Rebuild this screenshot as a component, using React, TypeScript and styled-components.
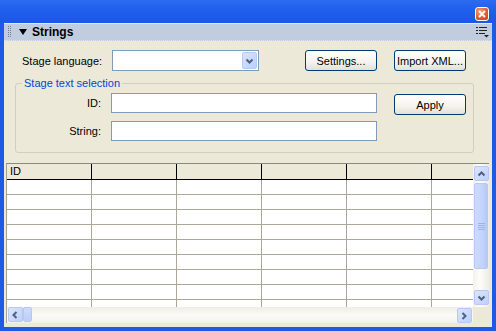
import React from "react";
import styled, { createGlobalStyle } from "styled-components";

const GlobalStyle = createGlobalStyle`
  html, body { margin: 0; padding: 0; background: #ffffff; }
  body { font-family: "Liberation Sans", Arial, sans-serif; font-size: 11px; color: #000; }
  * { box-sizing: border-box; }
`;

const Window = styled.div`
  width: 496px;
  height: 331px;
  display: flex;
  flex-direction: column;
  background: #1d5ae6;
  overflow: hidden;
`;

const TitleBar = styled.div`
  height: 23px;
  flex: none;
  display: flex;
  justify-content: flex-end;
  align-items: flex-start;
  padding: 7px 7px 0 0;
  background: linear-gradient(#2d6cf0, #1f60ec 40%, #1b58e4);
`;

const CloseButton = styled.div`
  width: 14px;
  height: 14px;
  border: 1px solid #fff;
  border-radius: 3px;
  background: radial-gradient(circle at 35% 30%, #f3a27f, #e0592c 60%, #c8421c);
  display: flex;
  align-items: center;
  justify-content: center;
`;

const Body = styled.div`
  flex: 1;
  margin: 0 4px 4px 4px;
  background: #ece9d8;
  display: flex;
  flex-direction: column;
`;

const PanelHeader = styled.div`
  height: 18px;
  flex: none;
  display: flex;
  align-items: center;
  padding: 0 3px 0 4px;
  background: #c1ccde;
  border-top: 1px solid #e4eaf4;
  border-bottom: 1px dotted #dde4ef;
`;

const GripIcon = styled.svg`
  margin-right: 7px;
  flex: none;
`;

const PanelTitle = styled.span`
  font-weight: bold;
  font-size: 12px;
  margin-left: 5px;
  flex: 1;
`;

const Form = styled.div`
  height: 122px;
  flex: none;
  padding: 9px 0 0 0;
  display: flex;
  flex-direction: column;
`;

const TopRow = styled.div`
  display: flex;
  align-items: center;
  height: 21px;
  padding-left: 18px;
`;

const RowLabel = styled.span`
  width: 90px;
  flex: none;
`;

const ComboBox = styled.div`
  width: 147px;
  height: 21px;
  border: 1px solid #7f9db9;
  background: #fff;
  display: flex;
  justify-content: flex-end;
  align-items: center;
  padding-right: 1px;
  margin-right: 46px;
`;

const DropButton = styled.div`
  width: 15px;
  height: 17px;
  border: 1px solid #b8cbf4;
  border-radius: 2px;
  background: linear-gradient(135deg, #d9e4fc, #bccefa);
  display: flex;
  align-items: center;
  justify-content: center;
`;

const XPButton = styled.div<{ $gap?: number }>`
  width: 72px;
  height: 21px;
  flex: none;
  margin-right: ${(p) => p.$gap ?? 0}px;
  border: 1px solid #003c74;
  border-radius: 3px;
  background: linear-gradient(#ffffff, #f4f3ee 60%, #e3e0d5);
  display: flex;
  align-items: center;
  justify-content: center;
`;

const GroupBox = styled.fieldset`
  margin: 6px 18px 0 11px;
  padding: 3px 0 11px 0;
  border: 1px solid #d0d0bf;
  border-radius: 3px;
`;

const Legend = styled.legend`
  color: #0046d5;
  line-height: 13px;
  margin-left: 6px;
  padding: 0 2px;
`;

const GroupGrid = styled.div`
  display: grid;
  grid-template-columns: 85px 266px 72px;
  grid-template-rows: 20px 20px;
  column-gap: 10px;
  row-gap: 8px;
  & > :nth-child(3) { margin-left: 7px; }
`;

const FieldLabel = styled.span`
  text-align: right;
  align-self: center;
`;

const TextInput = styled.div`
  border: 1px solid #7f9db9;
  background: #fff;
`;

const ApplyButton = styled(XPButton)`
  margin-top: 1px;
`;

const TableWrap = styled.div`
  height: 160px;
  flex: none;
  margin: 0 3px 0 2px;
  border-top: 1px solid #8a8a84;
  border-left: 1px solid #a5a49a;
  display: grid;
  grid-template-columns: 466px 16px;
  grid-template-rows: 143px 16px;
  background: #fff;
`;

const DataGrid = styled.div`
  overflow: hidden;
  background: #fff;
`;

const GridRow = styled.div<{ $head?: boolean }>`
  display: flex;
  height: ${(p) => (p.$head ? 16 : 15)}px;
  border-bottom: 1px solid ${(p) => (p.$head ? "#000" : "#aca899")};
  background: ${(p) => (p.$head ? "#ece9d8" : "#fff")};
`;

const GridCell = styled.div<{ $head?: boolean }>`
  width: 85px;
  flex: none;
  border-right: 1px solid ${(p) => (p.$head ? "#000" : "#aca899")};
  padding-left: 3px;
  line-height: 15px;
`;

const VScroll = styled.div`
  background: linear-gradient(90deg, #f3f1ea, #fdfdfb 40%, #eeede5);
  display: flex;
  flex-direction: column;
  padding: 2px 1px;
`;

const HScroll = styled.div`
  background: linear-gradient(#eeede5, #fbfbf8 50%, #f3f1ea);
  display: flex;
  align-items: flex-start;
  padding: 0 1px 0 1px;
`;

const Corner = styled.div`
  background: #ece9d8;
`;

const ScrollBtn = styled.div<{ $push?: boolean }>`
  width: 15px;
  height: 15px;
  flex: none;
  margin-left: ${(p) => (p.$push ? "auto" : "0")};
  margin-top: ${(p) => (p.$push ? "auto" : "0")};
  border: 1px solid #b7c9f2;
  border-radius: 2px;
  background: linear-gradient(135deg, #dbe6fd, #bed0fa);
  display: flex;
  align-items: center;
  justify-content: center;
`;

const VThumb = styled.div`
  height: 86px;
  margin-top: 2px;
  border: 1px solid #b7c9f2;
  border-radius: 2px;
  background: linear-gradient(90deg, #cddbfc, #c3d4fb 60%, #b6c9f7);
  display: flex;
  align-items: center;
  justify-content: center;
`;

const HThumb = styled.div`
  width: 9px;
  height: 15px;
  flex: none;
  border: 1px solid #b7c9f2;
  border-radius: 2px;
  background: linear-gradient(#cddbfc, #bccefa);
`;

const Chevron = ({ dir }: { dir: "up" | "down" | "left" | "right" }) => {
  const pts: Record<string, string> = {
    up: "1.5,5.5 4.5,2.5 7.5,5.5",
    down: "1.5,2.5 4.5,5.5 7.5,2.5",
    left: "5.5,1 2.5,4 5.5,7",
    right: "2.5,1 5.5,4 2.5,7",
  };
  return (
    <svg width="9" height="8" viewBox="0 0 9 8">
      <polyline points={pts[dir]} fill="none" stroke="#4d6185" strokeWidth="2" />
    </svg>
  );
};

const columns = ["ID", "", "", "", "", ""];
const rows = Array.from({ length: 10 }, (_, i) => i);
const gripDots = Array.from({ length: 6 }, (_, i) => i);

export default function App() {
  return (
    <>
      <GlobalStyle />
      <Window>
        <TitleBar>
          <CloseButton>
            <svg width="8" height="8" viewBox="0 0 8 8">
              <path d="M1 1L7 7M7 1L1 7" stroke="#fff" strokeWidth="1.8" />
            </svg>
          </CloseButton>
        </TitleBar>
        <Body>
          <PanelHeader>
            <GripIcon width="4" height="12" viewBox="0 0 4 12">
              {gripDots.map((i) => (
                <React.Fragment key={i}>
                  <rect x="0" y={i * 2} width="1" height="1" fill="#6f7a8f" />
                  <rect x="2" y={i * 2} width="1" height="1" fill="#6f7a8f" />
                </React.Fragment>
              ))}
            </GripIcon>
            <svg width="8" height="6" viewBox="0 0 8 6">
              <path d="M0 0H8L4 6Z" fill="#000" />
            </svg>
            <PanelTitle>Strings</PanelTitle>
            <svg width="13" height="11" viewBox="0 0 13 11">
              <rect x="0" y="0" width="2" height="1" fill="#222" />
              <rect x="3" y="0" width="8" height="1" fill="#222" />
              <rect x="0" y="3" width="2" height="1" fill="#222" />
              <rect x="3" y="3" width="8" height="1" fill="#222" />
              <rect x="0" y="6" width="2" height="1" fill="#222" />
              <rect x="3" y="6" width="6" height="1" fill="#222" />
              <path d="M8 8H13L10.5 10.5Z" fill="#222" />
            </svg>
          </PanelHeader>
          <Form>
            <TopRow>
              <RowLabel>Stage language:</RowLabel>
              <ComboBox>
                <DropButton>
                  <Chevron dir="down" />
                </DropButton>
              </ComboBox>
              <XPButton $gap={17}>Settings...</XPButton>
              <XPButton>Import XML...</XPButton>
            </TopRow>
            <GroupBox>
              <Legend>Stage text selection</Legend>
              <GroupGrid>
                <FieldLabel>ID:</FieldLabel>
                <TextInput />
                <ApplyButton>Apply</ApplyButton>
                <FieldLabel>String:</FieldLabel>
                <TextInput />
              </GroupGrid>
            </GroupBox>
          </Form>
          <TableWrap>
            <DataGrid>
              <GridRow $head>
                {columns.map((c, i) => (
                  <GridCell $head key={i}>
                    {c}
                  </GridCell>
                ))}
              </GridRow>
              {rows.map((r) => (
                <GridRow key={r}>
                  {columns.map((_, i) => (
                    <GridCell key={i} />
                  ))}
                </GridRow>
              ))}
            </DataGrid>
            <VScroll>
              <ScrollBtn>
                <Chevron dir="up" />
              </ScrollBtn>
              <VThumb>
                <svg width="7" height="7" viewBox="0 0 7 7">
                  <path d="M0 0.5H7M0 2.5H7M0 4.5H7M0 6.5H7" stroke="#9fb4e6" strokeWidth="1" />
                </svg>
              </VThumb>
              <ScrollBtn $push>
                <Chevron dir="down" />
              </ScrollBtn>
            </VScroll>
            <HScroll>
              <ScrollBtn>
                <Chevron dir="left" />
              </ScrollBtn>
              <HThumb />
              <ScrollBtn $push>
                <Chevron dir="right" />
              </ScrollBtn>
            </HScroll>
            <Corner />
          </TableWrap>
        </Body>
      </Window>
    </>
  );
}
